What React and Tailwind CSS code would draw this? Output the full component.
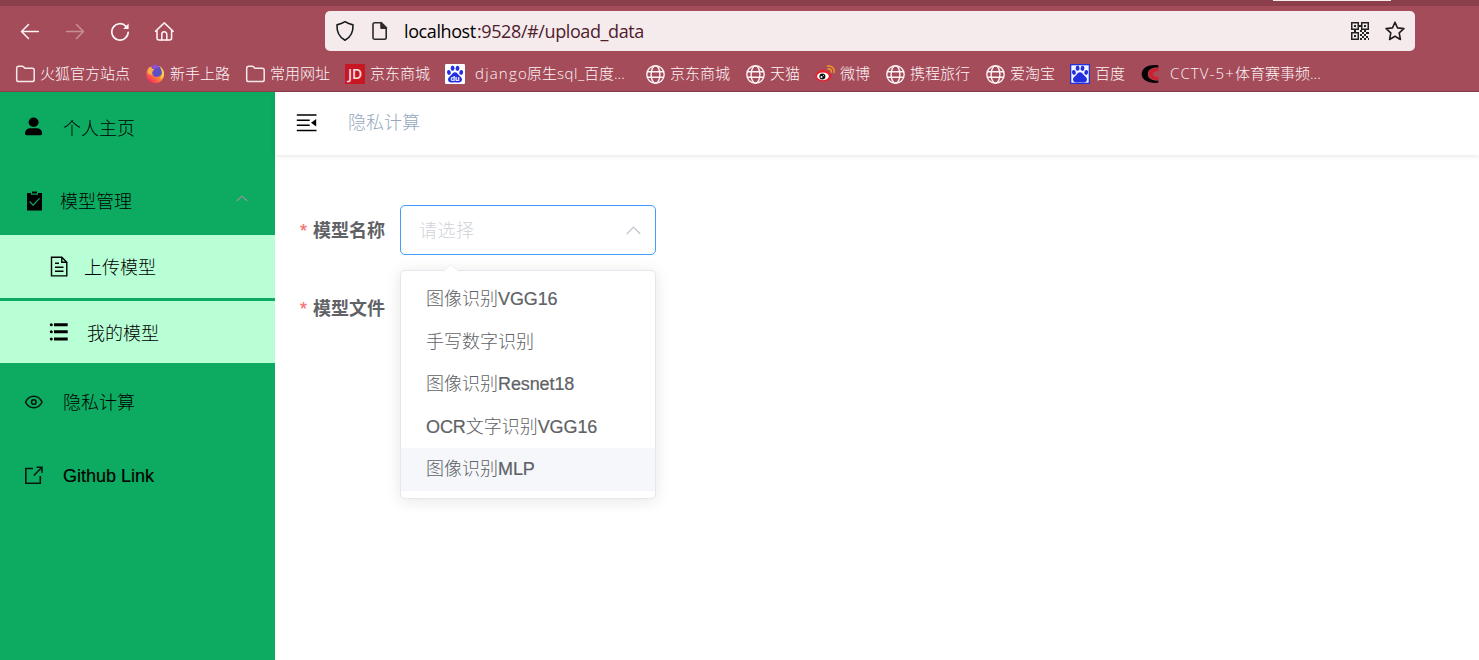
import React from "react";

const Folder = () => (
  <svg width="20" height="20" viewBox="0 0 20 20" fill="none" stroke="#f6e9eb" strokeWidth="1.5" strokeLinejoin="round">
    <path d="M1.7 15.7V4.2a1.9 1.9 0 0 1 1.9-1.9h3.6c.5 0 .9.2 1.3.5l1.4 1.5h7.4a1.9 1.9 0 0 1 1.9 1.9v9.5a1.9 1.9 0 0 1-1.9 1.9H3.6a1.9 1.9 0 0 1-1.9-1.9z" />
  </svg>
);

const Globe = () => (
  <svg width="20" height="20" viewBox="0 0 20 20" fill="none" stroke="#fbf3f4" strokeWidth="1.4">
    <circle cx="10.5" cy="10.5" r="8.7" />
    <ellipse cx="10.5" cy="10.5" rx="4.4" ry="8.7" />
    <path d="M2.3 7.7h16.4M2.3 13.3h16.4" />
  </svg>
);

const Firefox = () => (
  <svg width="20" height="20" viewBox="0 0 20 20">
    <defs>
      <linearGradient id="flame" x1="0.9" y1="0.15" x2="0.25" y2="0.95">
        <stop offset="0" stopColor="#ffc83f" />
        <stop offset="0.5" stopColor="#ff8a38" />
        <stop offset="1" stopColor="#f72e5c" />
      </linearGradient>
    </defs>
    <circle cx="10.2" cy="10.4" r="8.9" fill="url(#flame)" />
    <path d="M6.500 2.200C9.500.300 14.500.600 16.500 4.200c1.600 2.800.8 6.800-2.500 8.300-3 1.300-6.300-.3-6.800-3.300-.2-1.700.6-3 2-3.700L7 4.800z" fill="#5f4fc6" />
    <path d="M6.500 2.200C8.500.700 12.500.400 14.800 2.500L12 4.200l-4 .3z" fill="#9a4fd0" />
    <path d="M2.800 5.200 4.800 2.700l1.200 2 3.400.4-1.300 1.700c-1.300.9-1.400 2.300-.4 3.600-2.300.8-4.300-.4-5.200-2z" fill="#ffad4a" />
    <path d="M14.200 1.800c2.700 1.700 4.600 4.600 4.800 7.600.2 3-1.600 5.200-4.200 5.700 1.900-2.200 2.600-4.600 2-7.400-.4-2.200-1.500-4-2.600-5.900z" fill="#ffcf4a" />
  </svg>
);

const JD = () => (
  <span className="flex h-5 w-5 items-center justify-center bg-[#c91623] font-['Open_Sans',sans-serif] text-[14px] font-semibold leading-none tracking-[-0.3px] text-[#f6dfe1]">
    JD
  </span>
);

const Paw = ({ bg, label }) => (
  <svg width="20" height="20" viewBox="0 0 20 20">
    <rect width="20" height="20" rx={label ? 1.2 : 0} fill={bg} />
    {!label && <rect x="1.3" y="1.3" width="17.4" height="17.4" fill="#f4f5ff" />}
    <g fill="#2330dd">
      <ellipse cx="3.900" cy="8.400" rx="1.900" ry="2.500" transform="rotate(-12 3.900 8.400)" />
      <ellipse cx="7.600" cy="4.200" rx="1.900" ry="2.600" />
      <ellipse cx="12.500" cy="4.300" rx="1.900" ry="2.600" transform="rotate(10 12.500 4.300)" />
      <ellipse cx="16.200" cy="8.400" rx="1.900" ry="2.500" transform="rotate(12 16.200 8.400)" />
      <path d="M10 8.200c2 0 2.700 1.600 4 3 1.500 1.500 3 2.400 3 4.400 0 2.200-1.700 3-3.500 2.900-1.300 0-2.200-.3-3.500-.3s-2.200.3-3.500.3C4.700 18.600 3 17.800 3 15.600c0-2 1.500-2.900 3-4.400 1.300-1.400 2-3 4-3z" />
    </g>
    {label && (
      <text x="10" y="16.8" textAnchor="middle" fontFamily="Liberation Sans, sans-serif" fontWeight="bold" fontSize="7.500" fill="#fff">du</text>
    )}
  </svg>
);

const Weibo = () => (
  <svg width="20" height="20" viewBox="0 0 20 20">
    <path d="M7.800 5.600c1.600-.6 2.700.1 2.300 1.700 2.200-.8 4.200-.5 3.800 1.600 1.700.5 2.700 1.500 2.700 3 0 3-3.800 5.400-8.400 5.400-4.300 0-7.800-2-7.800-5 0-2.800 3.800-5.800 7.400-6.700z" fill="#e6202c" />
    <ellipse cx="7.900" cy="12.300" rx="5.800" ry="3.900" fill="#fff" />
    <circle cx="7.400" cy="12.500" r="3" fill="#111" />
    <circle cx="6.500" cy="13.100" r="1" fill="#fff" />
    <circle cx="8.500" cy="11.600" r=".5" fill="#fff" />
    <path d="M12.600 2.100c4.200-.8 7.400 2.400 6.300 6.500M13 4.900c2.200-.5 3.800 1.100 3.300 3.100" stroke="#f19a1c" strokeWidth="1.500" fill="none" strokeLinecap="round" />
  </svg>
);

const Cctv = () => (
  <svg width="20" height="20" viewBox="0 0 20 20">
    <path d="M18.300 1.300C9 .2 1.700 3.600 1.700 10.100c0 6.300 7 9.600 16.600 8.700v-2.200c-6.600.3-10.500-2-10.500-6.500 0-4.600 4.200-7 10.500-6.600z" fill="#080304" />
    <path d="M18.300 4.300c-5.600-.5-9.500 1.500-9.500 5.800s3.800 6.300 9.500 5.900v-3.100c-3.300.5-5.300-.5-5.300-2.800s2-3.200 5.300-2.700z" fill="#cf1f2c" />
  </svg>
);

function Bookmark({ icon, width, wide, children }) {
  return (
    <div className={`flex shrink-0 items-center ${width}`}>
      <span className={wide ? "mr-[10px] w-5 shrink-0" : "mr-[5px] w-5 shrink-0"}>{icon}</span>
      <span className="flex whitespace-nowrap pb-[2px]">{children}</span>
    </div>
  );
}

function BrowserChrome() {
  return (
    <header className="flex h-[92px] flex-col border-b border-[#8c3e4b] bg-[#a44c5a] text-[#fff5f7]">
      <div className="h-1.5 shrink-0 bg-[#8b3f4b] pl-[1273px]">
        <div className="h-px w-[118px] bg-[#f5ebed]" />
      </div>
      <div className="flex h-[50px] shrink-0 items-center pl-5">
        <svg width="20" height="20" viewBox="0 0 20 20" fill="none" stroke="#fff5f7" strokeWidth="1.500" strokeLinecap="round" strokeLinejoin="round">
          <path d="M18.300 10.500H1.800M8.500 3.500 1.500 10.500l7 7" />
        </svg>
        <svg className="ml-[25px]" width="20" height="20" viewBox="0 0 20 20" fill="none" stroke="#c78e97" strokeWidth="1.500" strokeLinecap="round" strokeLinejoin="round">
          <path d="M1.700 10.500h16.500M11.500 3.500l7 7-7 7" />
        </svg>
        <svg className="ml-[25px]" width="20" height="20" viewBox="0 0 20 20" fill="none" stroke="#fff5f7" strokeWidth="1.700" strokeLinecap="round">
          <path d="M18.200 11.300A8.200 8.200 0 1 1 16 5.300" />
          <path d="M18.600 2.500v5.400h-5.500z" fill="#fff5f7" stroke="none" />
        </svg>
        <svg className="ml-6" width="20" height="20" viewBox="0 0 20 20" fill="none" stroke="#fff5f7" strokeWidth="1.500" strokeLinecap="round" strokeLinejoin="round">
          <path d="M1.500 10.200 10.300 1.900l8.800 8.300M3 9.300v7.700c0 1.200.8 2 2 2h10.600c1.200 0 2-.8 2-2V9.300" />
          <path d="M7.800 18.900v-5.600a2.500 2.500 0 0 1 5 0v5.600" />
        </svg>
        <div className="ml-[151px] flex h-10 w-[1090px] items-center rounded-[5px] bg-[#f5ebed] pl-2.5 pr-2.5">
          <svg width="20" height="22" viewBox="0 0 20 22" fill="none" stroke="#18191b" strokeWidth="1.600" strokeLinejoin="round">
            <path d="M10 1.700c2.500 1.700 5 2.600 8 3.200.3 6.500-1.600 12-8 15.400C3.600 16.900 1.700 11.400 2 4.900c3-.6 5.500-1.500 8-3.200z" />
          </svg>
          <svg className="ml-[15px]" width="20" height="20" viewBox="0 0 20 20" fill="none" stroke="#2e2b2c" strokeWidth="1.600" strokeLinejoin="round">
            <path d="M4.700 1.800h6.500l5 5v9.700c0 1.100-.6 1.700-1.700 1.700H4.700c-1.100 0-1.700-.6-1.700-1.700v-13c0-1.100.6-1.700 1.700-1.700z" />
            <path d="M11 1.500v5.600h5.500z" fill="#2e2b2c" />
          </svg>
          <span className="ml-[14px] whitespace-nowrap font-['Open_Sans',sans-serif] text-[18px] font-normal leading-6 text-[#4f202c]">
            <span className="inline-block w-[73px] tracking-[-0.4px] text-black">localhost</span>
            <span className="tracking-[-0.4px]">:9528/#/upload_data</span>
          </span>
          <svg className="ml-auto" width="20" height="20" viewBox="0 0 20 20" fill="#242223">
            <path fillRule="evenodd" d="M1 1h8v8H1zM2.500 2.500v5h5v-5zM11 1h8v8h-8zM12.500 2.500v5h5v-5zM1 11h8v8H1zM2.500 12.500v5h5v-5z" />
            <path d="M4 4h2v2H4zM14 4h2v2h-2zM4 14h2v2H4zM9 4h2v2H9zM4 9h2v2H4zM10 9h2v2h-2zM14 9h2v2h-2zM12 11h2v2h-2zM16 11h3v2h-3zM10 13h2v2h-2zM14 13h2v2h-2zM12 15h2v2h-2zM16 15h2v2h-2zM10 17h2v2h-2zM14 17h2v2h-2zM18 17h1v2h-1z" />
          </svg>
          <svg className="ml-[15px]" width="20" height="20" viewBox="0 0 20 20" fill="none" stroke="#211d1e" strokeWidth="1.600" strokeLinejoin="round">
            <path d="m10 1.200 2.500 5.700 6.400.7-4.700 4.300 1.200 6.600-5.400-3.200-5.400 3.200 1.200-6.600L1.100 7.600l6.400-.7z" />
          </svg>
        </div>
      </div>
      <nav className="flex h-[35px] shrink-0 items-center pl-[15px] font-['Open_Sans','Noto_Sans_CJK_SC',sans-serif] text-[15px] font-light leading-5">
        <Bookmark icon={<Folder />} width="w-[130px]">火狐官方站点</Bookmark>
        <Bookmark icon={<Firefox />} width="w-[100px]">新手上路</Bookmark>
        <Bookmark icon={<Folder />} width="w-[100px]">常用网址</Bookmark>
        <Bookmark icon={<JD />} width="w-[100px]">京东商城</Bookmark>
        <Bookmark icon={<Paw bg="#ffffff" label />} width="w-[200px]" wide>
          <span className="w-[52px] tracking-[1.2px]">django</span>
          <span className="w-[30px]">原生</span>
          <span className="w-[27px] tracking-[0.6px]">sql_</span>
          <span>百度...</span>
        </Bookmark>
        <Bookmark icon={<Globe />} width="w-[100px]">京东商城</Bookmark>
        <Bookmark icon={<Globe />} width="w-[70px]">天猫</Bookmark>
        <Bookmark icon={<Weibo />} width="w-[70px]">微博</Bookmark>
        <Bookmark icon={<Globe />} width="w-[100px]">携程旅行</Bookmark>
        <Bookmark icon={<Globe />} width="w-[85px]">爱淘宝</Bookmark>
        <Bookmark icon={<Paw bg="#2330dd" />} width="w-[70px]">百度</Bookmark>
        <Bookmark icon={<Cctv />} width="w-[190px]" wide>
          <span className="w-[65px] tracking-[1.1px]">CCTV-5+</span>
          <span>体育赛事频...</span>
        </Bookmark>
      </nav>
    </header>
  );
}

function Sidebar() {
  return (
    <aside className="w-[275px] shrink-0 bg-[#0cab61] text-black">
      <div className="flex h-[72px] items-center pl-6">
        <svg className="mb-[2px]" width="20" height="20" viewBox="0 0 20 20">
          <ellipse cx="9.600" cy="5.300" rx="5" ry="4.700" />
          <path d="M1 16.500c0-3.700 2.700-5.300 5.700-5.300h5.800c3 0 5.700 1.600 5.700 5.300 0 1.100-.6 1.700-1.700 1.700h-13.800c-1.100 0-1.700-.6-1.700-1.700z" />
        </svg>
        <span className="ml-[19px] pt-px">个人主页</span>
      </div>
      <div className="flex h-[71px] items-center pl-6 pt-[2px]">
        <svg width="20" height="20" viewBox="0 0 20 20">
          <path d="M3 2h4v1.800h7V2h4v17.500H3z" />
          <path d="M8 .5h5v2H8z" />
          <path d="m5.600 10.500 3.500 3.700 6.500-6.800" fill="none" stroke="#0cab61" strokeWidth="1.200" />
        </svg>
        <span className="ml-4 pt-[2px]">模型管理</span>
        <svg className="mb-1 ml-auto mr-[27px]" width="12" height="8" viewBox="0 0 12 8" fill="none" stroke="#909399" strokeWidth="1.100">
          <path d="m.7 6 5.300-5 5.300 5" />
        </svg>
      </div>
      <div className="mb-[3px] flex h-[63px] items-center bg-[#b8ffd6] pl-[49px]">
        <svg width="20" height="22" viewBox="0 0 20 22" fill="none" stroke="#000" strokeWidth="1.400">
          <path d="M2.500 1.200h10.300l5 5v13.700H2.500zM12.800 1.200v5h5" />
          <path d="M6 7.200h4M6 11.200h8.500M6 15.200h8.500" strokeWidth="1.600" />
        </svg>
        <span className="ml-[15px] pt-[2px]">上传模型</span>
      </div>
      <div className="mb-[3px] flex h-[62px] items-center bg-[#b8ffd6] pl-[49px]">
        <svg width="20" height="20" viewBox="0 0 20 20">
          <path d="M5 1.200h13.700v3H5zM5 8.300h13.700v3H5zM5 15.400h13.700v3H5z" />
          <circle cx="2.300" cy="2.700" r="1.500" /><circle cx="2.300" cy="9.800" r="1.500" /><circle cx="2.300" cy="16.900" r="1.500" />
        </svg>
        <span className="ml-[18px] pt-[4px]">我的模型</span>
      </div>
      <div className="flex h-[73px] items-center pl-6">
        <svg width="20" height="20" viewBox="0 0 20 20" fill="none" stroke="#07180f" strokeWidth="1.600">
          <path d="M1.500 9c1.800-3.600 4.800-5.800 8.300-5.800s6.500 2.200 8.300 5.800c-1.800 3.600-4.800 5.800-8.300 5.800s-6.500-2.200-8.300-5.800z" />
          <circle cx="9.800" cy="9" r="2.300" />
        </svg>
        <span className="ml-[19px]">隐私计算</span>
      </div>
      <div className="flex h-[73px] items-center pl-6">
        <svg className="mb-[2px]" width="20" height="20" viewBox="0 0 20 20" fill="none" stroke="#07180f" strokeWidth="1.600">
          <path d="M9 3.500H1.800v14.700h14.500V11M9.800 10.500 18 2.300" />
          <path d="M12.500 1.500h6.300v6.300h-1.600V3.100h-4.700z" fill="#07180f" stroke="none" />
        </svg>
        <span className="ml-[19px] font-normal [-webkit-text-stroke:0.2px]">Github Link</span>
      </div>
    </aside>
  );
}

function Label({ children }) {
  return (
    <span className="flex w-[125px] shrink-0 items-center pt-[2px] font-bold text-[#606266]">
      <span className="ml-[25px] mr-[5px] w-2 font-normal text-[#f56c6c] [-webkit-text-stroke:0.2px]">*</span>
      {children}
    </span>
  );
}

const options = ["图像识别VGG16", "手写数字识别", "图像识别Resnet18", "OCR文字识别VGG16", "图像识别MLP"];

function Dropdown() {
  return (
    <div className="absolute left-[-1px] top-[64px] h-[229px] w-[256px] rounded-[5px] border border-[#e4e7ed] bg-white pt-[7px] shadow-[0_2px_15px_rgba(0,0,0,0.1)]">
      <svg className="absolute left-[42px] top-[-7px]" width="16" height="8" viewBox="0 0 16 8">
        <path d="M0 7.500 8 .5l8 7V8H0z" fill="#fff" />
        <path d="M0 7.500 8 .5l8 7" fill="none" stroke="#ebeef5" />
      </svg>
      <ul className="text-[#606266]">
        {options.map((label, i) => (
          <li key={label} className={`flex h-[42.5px] items-center whitespace-nowrap pl-[25px] ${i === 4 ? "bg-[#f5f7fa]" : ""}`}>
            {label.split(/([A-Za-z0-9]+)/).map((part, k) => (
              <span key={k} className={k % 2 ? "font-normal tracking-[-0.1px] [-webkit-text-stroke:0.2px]" : "font-light"}>{part}</span>
            ))}
          </li>
        ))}
      </ul>
    </div>
  );
}

function Content() {
  return (
    <main className="flex-1 bg-white">
      <div className="flex h-[63px] items-center pl-[21px] shadow-[0_1px_5px_rgba(0,21,41,0.1)]">
        <svg className="mb-[2px]" width="22" height="20" viewBox="0 0 22 20" fill="none" stroke="#000" strokeWidth="1.600">
          <path d="M.8 2h19.700M.8 7.200h12.900M.8 12.300h12.900M.8 17.500h19.700" />
          <path d="m15 9.700 5.200-3.700v7.400z" fill="#000" stroke="none" />
        </svg>
        <span className="ml-[30px] pb-px text-[#97a8be]">隐私计算</span>
      </div>
      <form className="pt-[50px]">
        <div className="flex h-[50px] items-center">
          <Label>模型名称</Label>
          <div className="relative flex h-[50px] w-[256px] items-center rounded-[5px] border border-[#409eff] pl-[18px] pr-[14px]">
            <span className="pt-[2px] tracking-[0.5px] text-[#d0d3da]">请选择</span>
            <svg className="ml-auto" width="15" height="9" viewBox="0 0 15 9" fill="none" stroke="#c0c4cc" strokeWidth="1.200">
              <path d="m.7 8 6.800-6.800L14.300 8" />
            </svg>
            <Dropdown />
          </div>
        </div>
        <div className="mt-[28px] flex h-[50px] items-center">
          <Label>模型文件</Label>
        </div>
      </form>
    </main>
  );
}

export default function App() {
  return (
    <div className="flex h-[660px] w-[1479px] flex-col overflow-hidden font-['Liberation_Sans','Noto_Sans_CJK_SC',sans-serif] text-[18px] font-light leading-6">
      <BrowserChrome />
      <div className="flex flex-1">
        <Sidebar />
        <Content />
      </div>
    </div>
  );
}
